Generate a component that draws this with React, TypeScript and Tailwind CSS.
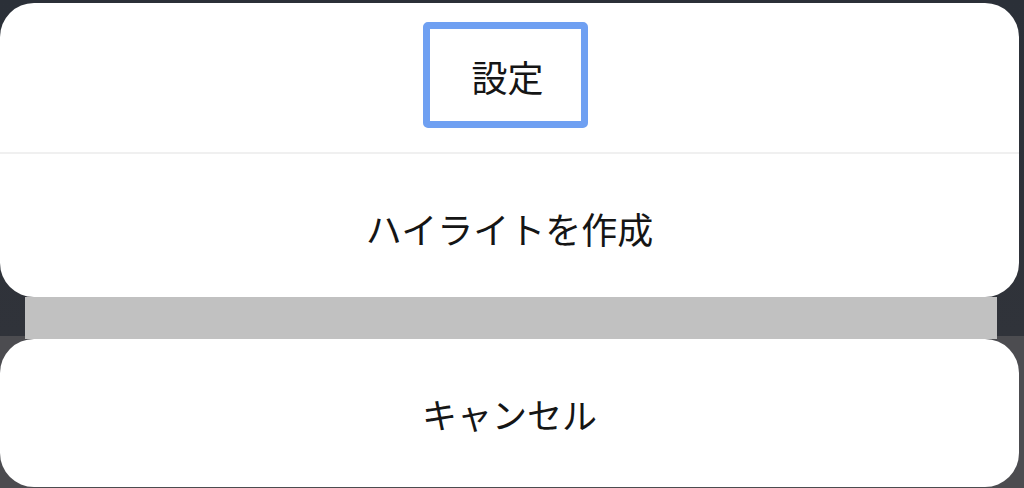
const font = { fontFamily: '"Noto Sans CJK JP", "Noto Sans", sans-serif' };

const App = () => {
  return (
    <div
      className="w-[1024px] h-[488px] overflow-hidden bg-[linear-gradient(to_bottom,#2b3038_0,#30333a_336px,#4c4c50_336px,#4c4c50_100%)] pt-[3px] pr-[5px] flex flex-col text-[#151515]"
      style={font}
    >
      {/* Top sheet */}
      <div className="h-[294px] shrink-0 rounded-[34px] bg-white flex flex-col">
        <div className="h-[151px] shrink-0 flex justify-center border-b-2 border-[#f0f0f0]">
          <div className="mt-[19px] ml-[-8px] w-[165px] h-[106px] border-[7px] border-[#6fa0f2] rounded-[5px] flex items-center justify-center pt-[2px] pl-[4px]">
            <span className="text-[36px] leading-none">設定</span>
          </div>
        </div>
        <div className="flex-1 flex items-center justify-center pt-[4px]">
          <span className="text-[36px] leading-none">ハイライトを作成</span>
        </div>
      </div>

      {/* Gray divider strip */}
      <div className="h-[42px] shrink-0 ml-[25px] mr-[22px] bg-[#c1c1c1]" />

      {/* Cancel sheet */}
      <div className="h-[148px] shrink-0 rounded-[34px] bg-white flex items-center justify-center">
        <span className="text-[35px] leading-none">キャンセル</span>
      </div>
    </div>
  );
};

export default App;
